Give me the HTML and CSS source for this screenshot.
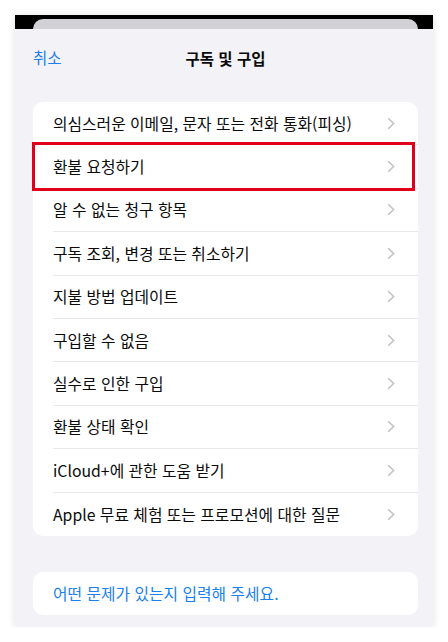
FILE: index.html
```html
<!DOCTYPE html>
<html lang="ko">

<head>
    <meta charset="UTF-8">
    <meta name="viewport" content="width=device-width, initial-scale=1.0">
    <title>구독 및 구입</title>
    <link rel="stylesheet" href="styles.css">
</head>

<body>
    <div class="frame">
        <div class="frame-top">
            <div class="back-card"></div>
        </div>
        <div class="sheet">
            <div class="sheet-header">
                <span class="cancel">취소</span>
                <h2 class="title">구독 및 구입</h2>
            </div>

            <ul class="menu">
                <li class="menu-item"><span>의심스러운 이메일, 문자 또는 전화 통화(피싱)</span><svg class="chevron" viewBox="0 0 8 13"><polyline points="1.2,1.2 6.6,6.5 1.2,11.8"/></svg></li>
                <li class="menu-item selected"><span>환불 요청하기</span><svg class="chevron" viewBox="0 0 8 13"><polyline points="1.2,1.2 6.6,6.5 1.2,11.8"/></svg></li>
                <li class="menu-item"><span>알 수 없는 청구 항목</span><svg class="chevron" viewBox="0 0 8 13"><polyline points="1.2,1.2 6.6,6.5 1.2,11.8"/></svg></li>
                <li class="menu-item"><span>구독 조회, 변경 또는 취소하기</span><svg class="chevron" viewBox="0 0 8 13"><polyline points="1.2,1.2 6.6,6.5 1.2,11.8"/></svg></li>
                <li class="menu-item"><span>지불 방법 업데이트</span><svg class="chevron" viewBox="0 0 8 13"><polyline points="1.2,1.2 6.6,6.5 1.2,11.8"/></svg></li>
                <li class="menu-item"><span>구입할 수 없음</span><svg class="chevron" viewBox="0 0 8 13"><polyline points="1.2,1.2 6.6,6.5 1.2,11.8"/></svg></li>
                <li class="menu-item"><span>실수로 인한 구입</span><svg class="chevron" viewBox="0 0 8 13"><polyline points="1.2,1.2 6.6,6.5 1.2,11.8"/></svg></li>
                <li class="menu-item"><span>환불 상태 확인</span><svg class="chevron" viewBox="0 0 8 13"><polyline points="1.2,1.2 6.6,6.5 1.2,11.8"/></svg></li>
                <li class="menu-item"><span>iCloud+에 관한 도움 받기</span><svg class="chevron" viewBox="0 0 8 13"><polyline points="1.2,1.2 6.6,6.5 1.2,11.8"/></svg></li>
                <li class="menu-item"><span>Apple 무료 체험 또는 프로모션에 대한 질문</span><svg class="chevron" viewBox="0 0 8 13"><polyline points="1.2,1.2 6.6,6.5 1.2,11.8"/></svg></li>
            </ul>

            <div class="search-box">어떤 문제가 있는지 입력해 주세요.</div>
        </div>
    </div>
</body>

</html>
```

FILE: styles.css
```css
body {
    margin: 0;
    background: #fff;
    font-family: "Noto Sans CJK KR", "Noto Sans", sans-serif;
    color: #0a0a0a;
}

.frame {
    width: 418px;
    margin: 15px 0 0 15px;
    box-shadow: 0 1px 8px rgba(0, 0, 0, 0.12);
}

.frame-top {
    background: #000;
    padding: 4px 15px 0 18px;
}

.back-card {
    height: 10px;
    background: #d1d1d6;
    border-radius: 10px 10px 0 0;
}

.sheet {
    background: #f2f2f7;
    padding: 0 15px 12px 18px;
    border-radius: 4px 4px 0 0;
}

.sheet-header {
    position: relative;
    height: 56px;
    display: flex;
    align-items: center;
    justify-content: center;
}

.cancel {
    position: absolute;
    left: 0;
    top: 18px;
    font-size: 15.5px;
    line-height: 20px;
    color: #1a7ff0;
}

.title {
    margin: 0;
    font-size: 15.5px;
    font-weight: bold;
    line-height: 20px;
    padding-top: 2px;
}

.menu {
    list-style: none;
    margin: 17px 0 0;
    padding: 0;
    background: #fff;
    border-radius: 10px;
}

.menu-item {
    position: relative;
    height: 43.4px;
    display: flex;
    align-items: center;
    justify-content: space-between;
    margin-left: 20px;
    padding-right: 23px;
    font-size: 15.8px;
    border-bottom: 1px solid #e8e8ec;
    box-sizing: border-box;
}

.menu-item:last-child {
    border-bottom: none;
}

.chevron {
    width: 8px;
    height: 13px;
    fill: none;
    stroke: #c2c2c6;
    stroke-width: 1.6;
}

.selected::after {
    content: "";
    position: absolute;
    left: -21px;
    right: 3px;
    top: -3px;
    bottom: -3px;
    border: 3px solid #e0001b;
}

.search-box {
    margin-top: 36px;
    height: 43px;
    display: flex;
    align-items: center;
    padding-left: 20px;
    background: #fff;
    border-radius: 10px;
    font-size: 15.8px;
    color: #1a7ff0;
}
```
